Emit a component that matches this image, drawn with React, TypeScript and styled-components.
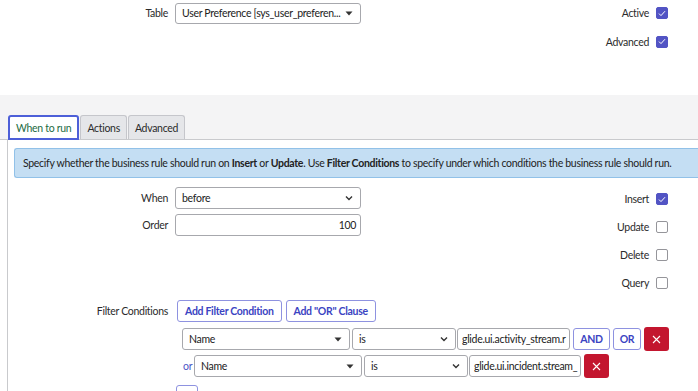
import React from "react";
import styled, { createGlobalStyle } from "styled-components";

const GlobalStyle = createGlobalStyle`
  body {
    margin: 0;
    background: #ffffff;
    font-family: "Lato", "Liberation Sans", sans-serif;
    font-size: 10.5px;
    letter-spacing: -0.3px;
    color: #2b2b2b;
    overflow: hidden;
  }
`;

const Caret = () => (
  <svg width="8" height="5" viewBox="0 0 8 5">
    <path d="M0.5 0.5 L7.5 0.5 L4 4.5 Z" fill="#333" />
  </svg>
);

const Chevron = () => (
  <svg width="8" height="6" viewBox="0 0 8 6">
    <path d="M1 1.5 L4 4.5 L7 1.5" stroke="#333" strokeWidth="1.4" fill="none" />
  </svg>
);

const Check = () => (
  <svg width="8" height="7" viewBox="0 0 8 7">
    <path d="M1 3.6 L3 5.6 L7 1.2" stroke="#fff" strokeWidth="1" fill="none" />
  </svg>
);

const Cross = () => (
  <svg width="9" height="9" viewBox="0 0 9 9">
    <path d="M1 1 L8 8 M8 1 L1 8" stroke="#fff" strokeWidth="1.1" />
  </svg>
);

const Page = styled.div`
  width: 698px;
  height: 391px;
  overflow: hidden;
`;

const TopSection = styled.div`
  height: 95px;
  display: flex;
  justify-content: space-between;
  padding-top: 2px;
  box-sizing: border-box;
`;

const LeftColumn = styled.div`
  display: flex;
  flex-direction: column;
  gap: 5px;
`;

const RightColumn = styled.div<{ $top?: number }>`
  display: flex;
  flex-direction: column;
  align-items: flex-end;
  padding-right: 30px;
  margin-top: ${({ $top }) => $top ?? 0}px;
`;

const Field = styled.div`
  display: grid;
  grid-template-columns: 168px auto;
  column-gap: 7px;
  align-items: center;
  height: 22px;
`;

const Label = styled.span`
  text-align: right;
  font-size: 10.5px;
  color: #2b2b2b;
`;

const SelectBox = styled.div<{ $w: number; $h?: number }>`
  width: ${({ $w }) => $w}px;
  height: ${({ $h }) => $h ?? 22}px;
  box-sizing: border-box;
  border: 1px solid #a7a8ad;
  border-radius: 3px;
  background: #fff;
  display: flex;
  align-items: center;
  justify-content: space-between;
  padding: 0 7px 0 6px;
  font-size: 10.5px;
  color: #222;
  white-space: nowrap;
  overflow: hidden;
`;

const TextInput = styled.div<{ $w: number; $right?: boolean }>`
  width: ${({ $w }) => $w}px;
  height: 22px;
  box-sizing: border-box;
  border: 1px solid #a7a8ad;
  border-radius: 3px;
  background: #fff;
  display: flex;
  align-items: center;
  justify-content: ${({ $right }) => ($right ? "flex-end" : "flex-start")};
  padding: 0 4px;
  font-size: 10.5px;
  color: #222;
  white-space: nowrap;
  overflow: hidden;
`;

const CheckRow = styled.div<{ $h: number }>`
  display: flex;
  align-items: center;
  gap: 7px;
  height: ${({ $h }) => $h}px;
  font-size: 10.5px;
`;

const Box = styled.span<{ $on?: boolean }>`
  width: 12px;
  height: 12px;
  box-sizing: border-box;
  border-radius: 2px;
  display: inline-flex;
  align-items: center;
  justify-content: center;
  background: ${({ $on }) => ($on ? "#5254c4" : "#fff")};
  border: 1px solid ${({ $on }) => ($on ? "#5254c4" : "#95959a")};
`;

const TabStrip = styled.div`
  background: #f4f4f5;
  height: 45px;
  box-sizing: border-box;
  padding: 21px 0 0 8px;
  display: flex;
  align-items: flex-end;
  border-bottom: 1px solid #c9cacd;
`;

const Tab = styled.div<{ $active?: boolean }>`
  height: ${({ $active }) => ($active ? 25 : 24)}px;
  box-sizing: border-box;
  padding: 0 ${({ $active }) => ($active ? 6 : 6)}px;
  margin-right: 1px;
  display: flex;
  align-items: center;
  font-size: 10.5px;
  border-radius: 3px 3px 0 0;
  background: ${({ $active }) => ($active ? "#fff" : "#e5e6e9")};
  border: ${({ $active }) => ($active ? "2px solid #4d5fd8" : "1px solid #c5c6cb")};
  border-bottom: ${({ $active }) => ($active ? "2px solid #4d5fd8" : "none")};
  color: ${({ $active }) => ($active ? "#1c6b43" : "#2b2b2b")};
  margin-bottom: ${({ $active }) => ($active ? -1 : 0)}px;
`;

const Panel = styled.div`
  margin-left: 7px;
  border-left: 1px solid #c9cacd;
  padding: 8px 0 0 6px;
  height: 260px;
`;

const InfoBox = styled.div`
  height: 30px;
  box-sizing: border-box;
  background: #c4def3;
  border: 1px solid #91c1e8;
  border-right: none;
  border-radius: 3px 0 0 3px;
  display: flex;
  align-items: center;
  padding-left: 8px;
  font-size: 10.5px;
  white-space: nowrap;
  color: #222;
  b {
    font-weight: 700;
  }
`;

const FieldsArea = styled.div`
  display: flex;
  justify-content: space-between;
  margin-left: -14px;
`;

const FieldsLeft = styled(LeftColumn)`
  padding-top: 9px;
`;

const FilterSection = styled.div`
  margin-left: -14px;
  margin-top: 3px;
`;

const FilterRow = styled.div`
  display: grid;
  grid-template-columns: 168px auto;
  column-gap: 9px;
  align-items: center;
`;

const ButtonGroup = styled.div`
  display: flex;
  gap: 4px;
`;

const OutlineButton = styled.div<{ $w?: number }>`
  height: 22px;
  box-sizing: border-box;
  ${({ $w }) => ($w ? `width: ${$w}px; justify-content: center;` : "padding: 0 7px;")}
  border: 1px solid #8e92e0;
  border-radius: 3px;
  background: #fff;
  color: #3b44c2;
  font-weight: 700;
  font-size: 10.5px;
  display: flex;
  align-items: center;
  white-space: nowrap;
`;

const DeleteButton = styled.div`
  width: 25px;
  height: 24px;
  flex-shrink: 0;
  box-sizing: border-box;
  border-radius: 3px;
  background: #c3162f;
  display: flex;
  align-items: center;
  justify-content: center;
`;

const Conditions = styled.div`
  display: flex;
  flex-direction: column;
  gap: 5px;
  margin-top: 6px;
  padding-left: 182px;
`;

const CondRow = styled.div`
  display: flex;
  align-items: center;
  height: 22px;
`;

const OrText = styled.span`
  color: #4b55c6;
  font-size: 10.5px;
  width: 10px;
  margin-left: 1px;
  margin-right: 1px;
`;

const Gap = styled.span<{ $w: number }>`
  width: ${({ $w }) => $w}px;
  flex-shrink: 0;
`;

const StubButton = styled.div`
  margin: 8px 0 0 176px;
  width: 22px;
  height: 22px;
  box-sizing: border-box;
  border: 1px solid #8e92e0;
  border-radius: 3px;
`;

export default function App() {
  return (
    <Page>
      <GlobalStyle />
      <TopSection>
        <LeftColumn>
          <Field>
            <Label>Table</Label>
            <SelectBox $w={186} $h={21}>
              <span>User Preference [sys_user_preferen...</span>
              <Caret />
            </SelectBox>
          </Field>
        </LeftColumn>
        <RightColumn $top={-3}>
          <CheckRow $h={28}>
            Active
            <Box $on>
              <Check />
            </Box>
          </CheckRow>
          <CheckRow $h={29}>
            Advanced
            <Box $on>
              <Check />
            </Box>
          </CheckRow>
        </RightColumn>
      </TopSection>

      <TabStrip>
        <Tab $active>When to run</Tab>
        <Tab>Actions</Tab>
        <Tab>Advanced</Tab>
      </TabStrip>

      <Panel>
        <InfoBox>
          Specify whether the business rule should run on&nbsp;<b>Insert</b>&nbsp;or&nbsp;
          <b>Update</b>. Use&nbsp;<b>Filter Conditions</b>&nbsp;to specify under which conditions
          the business rule should run.
        </InfoBox>

        <FieldsArea>
          <FieldsLeft>
            <Field>
              <Label>When</Label>
              <SelectBox $w={186}>
                <span>before</span>
                <Chevron />
              </SelectBox>
            </Field>
            <Field>
              <Label>Order</Label>
              <TextInput $w={186} $right>
                100
              </TextInput>
            </Field>
          </FieldsLeft>
          <RightColumn $top={7}>
            <CheckRow $h={28}>
              Insert
              <Box $on>
                <Check />
              </Box>
            </CheckRow>
            <CheckRow $h={28}>
              Update
              <Box />
            </CheckRow>
            <CheckRow $h={28}>
              Delete
              <Box />
            </CheckRow>
            <CheckRow $h={28}>
              Query
              <Box />
            </CheckRow>
          </RightColumn>
        </FieldsArea>

        <FilterSection>
          <FilterRow>
            <Label>Filter Conditions</Label>
            <ButtonGroup>
              <OutlineButton>Add Filter Condition</OutlineButton>
              <OutlineButton>Add "OR" Clause</OutlineButton>
            </ButtonGroup>
          </FilterRow>
          <Conditions>
            <CondRow>
              <SelectBox $w={168}>
                <span>Name</span>
                <Caret />
              </SelectBox>
              <Gap $w={2} />
              <SelectBox $w={104}>
                <span>is</span>
                <Chevron />
              </SelectBox>
              <Gap $w={1} />
              <TextInput $w={113}>glide.ui.activity_stream.r</TextInput>
              <Gap $w={3} />
              <OutlineButton $w={37}>AND</OutlineButton>
              <Gap $w={3} />
              <OutlineButton $w={28}>OR</OutlineButton>
              <Gap $w={3} />
              <DeleteButton>
                <Cross />
              </DeleteButton>
            </CondRow>
            <CondRow>
              <OrText>or</OrText>
              <SelectBox $w={168}>
                <span>Name</span>
                <Caret />
              </SelectBox>
              <Gap $w={2} />
              <SelectBox $w={104}>
                <span>is</span>
                <Chevron />
              </SelectBox>
              <Gap $w={1} />
              <TextInput $w={112}>glide.ui.incident.stream_</TextInput>
              <Gap $w={3} />
              <DeleteButton>
                <Cross />
              </DeleteButton>
            </CondRow>
          </Conditions>
          <StubButton />
        </FilterSection>
      </Panel>
    </Page>
  );
}
